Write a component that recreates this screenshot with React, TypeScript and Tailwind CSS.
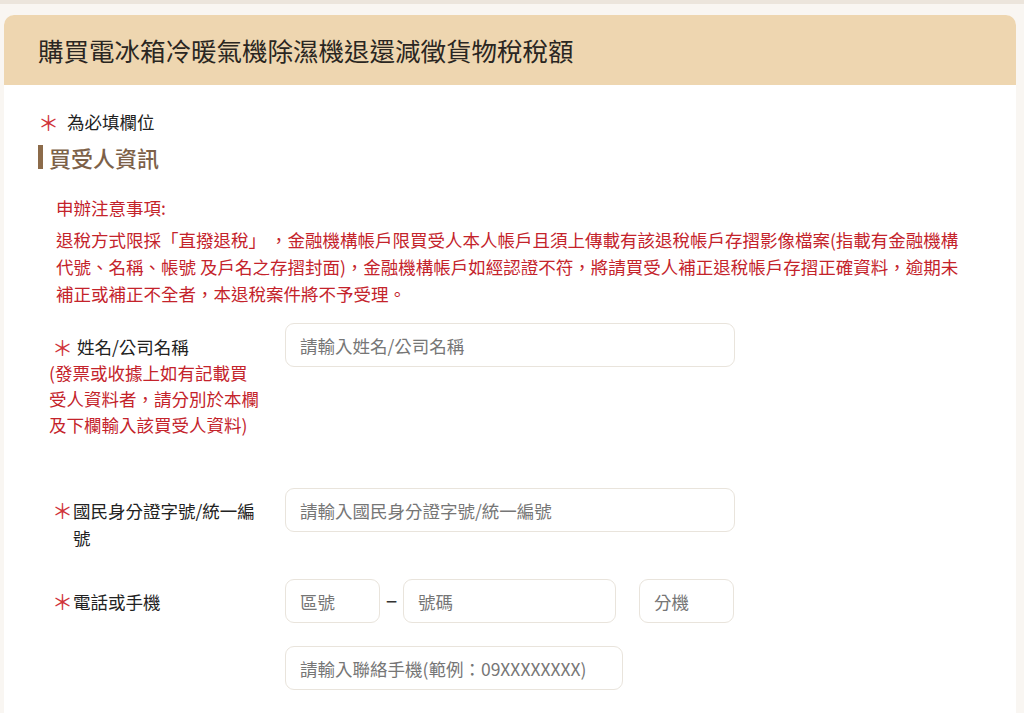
import React from 'react';

const font = { fontFamily: '"Noto Sans CJK TC", "Noto Sans", sans-serif' };

function Star() {
  return (
    <span className="h-[26px] flex items-center shrink-0 text-[#d0343a] text-[21px] leading-none">＊</span>
  );
}

function Field({ placeholder, className }: { placeholder: string; className: string }) {
  return (
    <input
      placeholder={placeholder}
      className={`h-[44px] rounded-[9px] border border-[#e9e4dc] bg-white px-[14px] text-[17.5px] text-[#333] placeholder:text-[#767676] outline-none ${className}`}
    />
  );
}

export default function App() {
  return (
    <div className="min-h-screen bg-[#f9f6f2] border-t-[4px] border-[#ece5dc]" style={font}>
      <div className="pt-[11px] pl-[4px] pr-[8px]">
        <div className="rounded-t-[10px] bg-white">
          {/* Header */}
          <div className="h-[70px] rounded-t-[10px] bg-[#eed6b0] flex items-center pl-[34px]">
            <h1 className="text-[25.5px] font-normal text-[#2a2622]">
              購買電冰箱冷暖氣機除濕機退還減徵貨物稅稅額
            </h1>
          </div>

          <div className="pl-[34px] pr-[40px] pt-[25px] pb-[30px] text-[17.5px]">
            <div className="flex items-center gap-[8px] text-[#222] h-[24px]">
              <Star />
              <span>為必填欄位</span>
            </div>
            <div className="mt-[11px] flex items-center gap-[6px] h-[24px]">
              <div className="w-[5px] h-[24px] bg-[#8c6b4a]" />
              <span className="text-[22px] font-medium text-[#7d6148] leading-[24px]">買受人資訊</span>
            </div>

            {/* Notice */}
            <div className="mt-[25px] pl-[18px] leading-[27px] text-[#c4232b] whitespace-nowrap">
              <div>申辦注意事項:</div>
              <div className="mt-[5px]">
                退稅方式限採「直撥退稅」 ，金融機構帳戶限買受人本人帳戶且須上傳載有該退稅帳戶存摺影像檔案(指載有金融機構
                <br />
                代號、名稱、帳號 及戶名之存摺封面)，金融機構帳戶如經認證不符，將請買受人補正退稅帳戶存摺正確資料，逾期未
                <br />
                補正或補正不全者，本退稅案件將不予受理。
              </div>
            </div>

            {/* Name */}
            <div className="mt-[16px] flex">
              <div className="w-[247px] pl-[11px] pt-[11px] whitespace-nowrap">
                <div className="flex items-center gap-[4px] pl-[3px] text-[#222] leading-[26px]">
                  <Star />
                  <span>姓名/公司名稱</span>
                </div>
                <div className="text-[#c4232b] leading-[26px]">
                  (發票或收據上如有記載買
                  <br />
                  受人資料者，請分別於本欄
                  <br />
                  及下欄輸入該買受人資料)
                </div>
              </div>
              <Field placeholder="請輸入姓名/公司名稱" className="w-[450px]" />
            </div>

            {/* ID */}
            <div className="mt-[50px] flex">
              <div className="w-[247px] pl-[14px] pt-[9px] text-[#222] flex items-start leading-[27px] whitespace-nowrap">
                <Star />
                <span>
                  國民身分證字號/統一編
                  <br />
                  號
                </span>
              </div>
              <Field placeholder="請輸入國民身分證字號/統一編號" className="w-[450px]" />
            </div>

            {/* Phone */}
            <div className="mt-[28px] flex">
              <div className="w-[247px] pl-[14px] pt-[9px] text-[#222] flex items-start leading-[27px]">
                <Star />
                <span>電話或手機</span>
              </div>
              <div className="flex flex-col gap-[23px]">
                <div className="flex items-center">
                  <Field placeholder="區號" className="w-[95px]" />
                  <span className="w-[23px] text-center text-[20px] text-[#333]">−</span>
                  <Field placeholder="號碼" className="w-[213px]" />
                  <div className="w-[23px]" />
                  <Field placeholder="分機" className="w-[95px]" />
                </div>
                <Field placeholder="請輸入聯絡手機(範例：09XXXXXXXX)" className="w-[338px]" />
              </div>
            </div>
          </div>
        </div>
      </div>
    </div>
  );
}
